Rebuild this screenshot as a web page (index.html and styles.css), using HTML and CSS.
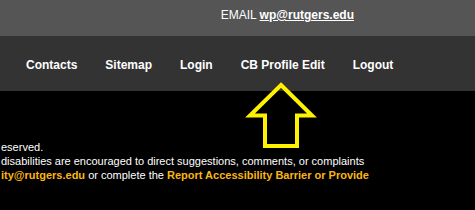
FILE: index.html
```html
<!DOCTYPE html>
<html lang="en">
<head>
    <meta charset="UTF-8">
    <meta name="viewport" content="width=device-width, initial-scale=1.0">
    <title>Rutgers Footer</title>
    <link rel="stylesheet" href="styles.css">
</head>
<body>
    <div class="top-bar">
        EMAIL <a href="#">wp@rutgers.edu</a>
    </div>

    <nav class="main-nav">
        <a href="#">Contacts</a>
        <a href="#">Sitemap</a>
        <a href="#">Login</a>
        <a href="#">CB Profile Edit</a>
        <a href="#">Logout</a>
    </nav>

    <div class="footer">
        <div class="line">eserved.</div>
        <div class="line">disabilities are encouraged to direct suggestions, comments, or complaints</div>
        <div class="line"><a href="#">ity@rutgers.edu</a> or complete the <a href="#">Report Accessibility Barrier or Provide</a></div>
    </div>

    <!-- annotation arrow pointing at the menu item -->
    <svg class="pointer" width="72" height="72" viewBox="0 0 72 72">
        <path d="M36 6 L67 36.5 L52 36.5 L52 67 L20 67 L20 36.5 L5 36.5 Z" fill="none" stroke="#fff200" stroke-width="4" stroke-linejoin="miter"/>
    </svg>
</body>
</html>
```

FILE: styles.css
```css
body {
    margin: 0;
    background-color: #000;
    font-family: "Liberation Sans", Arial, sans-serif;
    color: #fff;
    width: 475px;
    height: 210px;
    overflow: hidden;
    position: relative;
}
.top-bar {
    height: 36px;
    box-sizing: border-box;
    padding: 8px 121px 0 0;
    background-color: #555;
    font-size: 12px;
    text-align: right;
}
.top-bar a {
    color: #fff;
    font-weight: bold;
    text-decoration: underline;
}
.main-nav {
    display: flex;
    align-items: center;
    gap: 28px;
    height: 55px;
    box-sizing: border-box;
    padding: 2px 0 0 26px;
    background-color: #333;
}
.main-nav a {
    color: #fff;
    font-size: 12px;
    font-weight: bold;
    text-decoration: none;
    white-space: nowrap;
}
.footer {
    margin-top: 49px;
    padding-left: 1px;
    font-size: 11px;
    line-height: 14px;
}
.footer .line {
    white-space: nowrap;
}
.footer a {
    color: #fcb614;
    font-weight: bold;
    text-decoration: none;
}
.pointer {
    position: absolute;
    left: 245px;
    top: 79px;
}
```
